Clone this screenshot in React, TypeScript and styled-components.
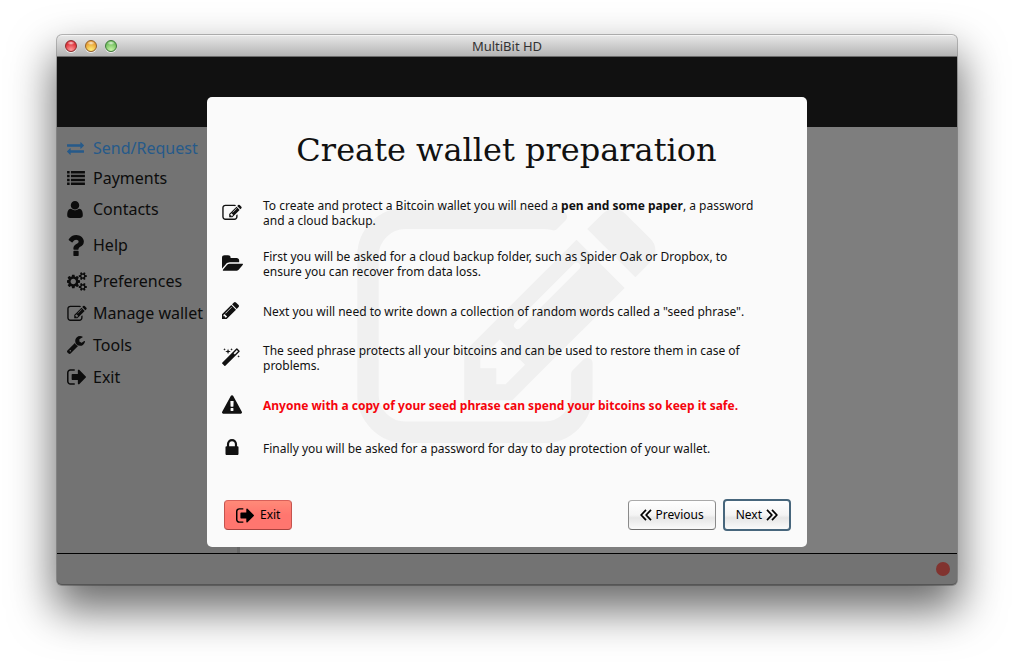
import React from "react";
import styled, { createGlobalStyle, css } from "styled-components";

const sans = `"Noto Sans", "Open Sans", sans-serif`;

const GlobalStyle = createGlobalStyle`
  * { box-sizing: border-box; }
  body { margin: 0; background: #fff; font-family: ${sans}; font-size: 12px; color: #111; }
`;

type Glyph = { box: string; d: string };

const glyphs: Record<string, Glyph> = {
  exchange: {
    box: "0 288 1792 1344",
    d: "M1792 1184v192q0 13-9.5 22.5t-22.5 9.5h-1376v192q0 13-9.5 22.5t-22.5 9.5q-12 0-24-10l-319-320q-9-9-9-22 0-14 9-23l320-320q9-9 23-9 13 0 22.5 9.5t9.5 22.5v192h1376q13 0 22.5 9.5t9.5 22.5zm0-544q0 14-9 23l-320 320q-9 9-23 9-13 0-22.5-9.5t-9.5-22.5v-192h-1376q-13 0-22.5-9.5t-9.5-22.5v-192q0-13 9.5-22.5t22.5-9.5h1376v-192q0-14 9-23t23-9q12 0 24 10l319 319q9 9 9 23z",
  },
  list: {
    box: "0 128 1792 1408",
    d: "M0 128h256v256h-256zM384 128h1408v256h-1408zM0 512h256v256h-256zM384 512h1408v256h-1408zM0 896h256v256h-256zM384 896h1408v256h-1408zM0 1280h256v256h-256zM384 1280h1408v256h-1408z",
  },
  user: {
    box: "192 128 1408 1536",
    d: "M1600 1405q0 120-73 189.5t-194 69.5h-874q-121 0-194-69.5t-73-189.5q0-53 3.5-103.5t14-109 26.5-108.5 43-97.5 62-81 85.5-53.5 111.5-20q9 0 42 21.5t74.5 48 108 48 133.5 21.5 133.5-21.5 108-48 74.5-48 42-21.5q61 0 111.5 20t85.5 53.5 62 81 43 97.5 26.5 108.5 14 109 3.5 103.5zm-320-893q0 159-112.5 271.5t-271.5 112.5-271.5-112.5-112.5-271.5 112.5-271.5 271.5-112.5 271.5 112.5 112.5 271.5z",
  },
  question: {
    box: "388 256 1016 1280",
    d: "M1088 1256v240q0 16-12 28t-28 12h-240q-16 0-28-12t-12-28v-240q0-16 12-28t28-12h240q16 0 28 12t12 28zm316-600q0 54-15.5 101t-35 76.5-55 59.5-57.5 43.5-61 35.5q-41 23-68.5 65t-27.5 67q0 17-12 32.5t-28 15.5h-240q-15 0-25.5-18.5t-10.5-37.5v-45q0-83 65-156.5t143-108.5q59-27 84-56t25-76q0-42-46.5-74t-107.5-32q-65 0-108 29-35 25-107 115-13 16-31 16-12 0-25-8l-164-125q-13-10-15.5-25t5.5-28q160-266 464-266 80 0 161 31t146 83 106 127.5 41 158.5z",
  },
  cogs: {
    box: "0 0 1856 1792",
    d: "M832 896q0-106-75-181t-181-75-181 75-75 181 75 181 181 75 181-75 75-181zm768 512q0-52-38-90t-90-38-90 38-38 90q0 53 37.5 90.5t90.5 37.5 90.5-37.5 37.5-90.5zm0-1024q0-52-38-90t-90-38-90 38-38 90q0 53 37.5 90.5t90.5 37.5 90.5-37.5 37.5-90.5zm-384 421v185q0 10-7 19.5t-16 10.5l-155 24q-11 35-32 76 34 48 90 115 7 11 7 20 0 12-7 19-23 30-82.5 89.5t-78.5 59.5q-11 0-21-7l-115-90q-37 19-77 31-11 108-23 155-7 24-30 24h-186q-11 0-20-7.5t-10-17.5l-23-153q-34-10-75-31l-118 89q-7 7-20 7-11 0-21-8-144-133-144-160 0-9 7-19 10-14 41-53t47-61q-23-44-35-82l-152-24q-10-1-17-9.5t-7-19.5v-185q0-10 7-19.5t16-10.5l155-24q11-35 32-76-34-48-90-115-7-11-7-20 0-12 7-20 22-30 82-89t79-59q11 0 21 7l115 90q34-18 77-32 11-108 23-154 7-24 30-24h186q11 0 20 7.5t10 17.5l23 153q34 10 75 31l118-89q8-7 20-7 11 0 21 8 144 133 144 160 0 8-7 19-12 16-42 54t-45 60q23 48 34 82l152 23q10 2 17 10.5t7 19.5zm640 533v140q0 16-149 31-12 27-30 52 51 113 51 138 0 4-4 7-122 71-124 71-8 0-46-47t-52-68q-20 2-30 2t-30-2q-14 21-52 68t-46 47q-2 0-124-71-4-3-4-7 0-25 51-138-18-25-30-52-149-15-149-31v-140q0-16 149-31 13-29 30-52-51-113-51-138 0-4 4-7 4-2 35-20t59-34 30-16q8 0 46 46.5t52 67.5q20-2 30-2t30 2q51-71 92-112l6-2q4 0 124 70 4 3 4 7 0 25-51 138 17 23 30 52 149 15 149 31zm0-1024v140q0 16-149 31-12 27-30 52 51 113 51 138 0 4-4 7-122 71-124 71-8 0-46-47t-52-68q-20 2-30 2t-30-2q-14 21-52 68t-46 47q-2 0-124-71-4-3-4-7 0-25 51-138-18-25-30-52-149-15-149-31v-140q0-16 149-31 13-29 30-52-51-113-51-138 0-4 4-7 4-2 35-20t59-34 30-16q8 0 46 46.5t52 67.5q20-2 30-2t30 2q51-71 92-112l6-2q4 0 124 70 4 3 4 7 0 25-51 138 17 23 30 52 149 15 149 31z",
  },
  edit: {
    box: "0 64 1792 1472",
    d: "M888 1184l116-116-152-152-116 116v56h96v96h56zm440-720q-16-16-33 1l-350 350q-17 17-1 33t33-1l350-350q17-17 1-33zm80 594v190q0 119-84.5 203.5t-203.5 84.5h-832q-119 0-203.5-84.5t-84.5-203.5v-832q0-119 84.5-203.5t203.5-84.5h832q63 0 117 25 15 7 18 23 3 17-9 29l-49 49q-14 14-32 8-23-6-45-6h-832q-66 0-113 47t-47 113v832q0 66 47 113t113 47h832q66 0 113-47t47-113v-126q0-13 9-22l64-64q15-15 35-7t20 29zm-96-738l288 288-672 672h-288v-288zm444 132l-92 92-288-288 92-92q28-28 68-28t68 28l152 152q28 28 28 68t-28 68z",
  },
  wrench: {
    box: "85 128 1641 1643",
    d: "M448 1472q0-26-19-45t-45-19-45 19-19 45 19 45 45 19 45-19 19-45zm644-420l-682 682q-37 37-90 37-52 0-91-37l-106-108q-38-36-38-90 0-53 38-91l681-681q39 98 114.5 173.5t173.5 114.5zm634-435q0 39-23 106-47 134-164.5 217.5t-258.5 83.5q-185 0-316.5-131.5t-131.5-316.5 131.5-316.5 316.5-131.5q58 0 121.5 16.5t107.5 46.5q16 11 16 28t-16 28l-293 169v224l193 107q5-3 79-48.5t135.5-81 70.5-35.5q15 0 23.5 10t8.5 25z",
  },
  signOut: {
    box: "64 256 1568 1280",
    d: "M704 1440q0 4 1 20t.5 26.5-3 23.5-10 19.5-20.5 6.5h-320q-119 0-203.5-84.5t-84.5-203.5v-704q0-119 84.5-203.5t203.5-84.5h320q13 0 22.5 9.5t9.5 22.5q0 4 1 20t.5 26.5-3 23.5-10 19.5-20.5 6.5h-320q-66 0-113 47t-47 113v704q0 66 47 113t113 47h312l11.5 1 11.5 3 8 5.5 7 9 2 13.5zm928-544q0 26-19 45l-544 544q-19 19-45 19t-45-19-19-45v-288h-448q-26 0-45-19t-19-45v-384q0-26 19-45t45-19h448v-288q0-26 19-45t45-19 45 19l544 544q19 19 19 45z",
  },
  folder: {
    box: "0 128 1879 1408",
    d: "M1879 952q0 31-31 66l-336 396q-43 51-120.5 86.5t-143.5 35.5h-1088q-34 0-60.5-13t-26.5-43q0-31 31-66l336-396q43-51 120.5-86.5t143.5-35.5h1088q34 0 60.5 13t26.5 43zm-343-344v160h-832q-94 0-197 47.5t-164 119.5l-337 396-5 6q0-4-.5-12.5t-.5-12.5v-960q0-92 66-158t158-66h320q92 0 158 66t66 158v32h544q92 0 158 66t66 158z",
  },
  pencil: {
    box: "128 149 1515 1515",
    d: "M491 1536l91-91-235-235-91 91v107h128v128h107zm523-928q0-22-22-22-10 0-17 7l-542 542q-7 7-7 17 0 22 22 22 10 0 17-7l542-542q7-7 7-17zm-54-192l416 416-832 832h-416v-416zm683 96q0 53-37 90l-166 166-416-416 166-165q36-38 90-38 53 0 91 38l235 234q37 39 37 91z",
  },
  magic: {
    box: "91 0 1637 1637",
    d: "M1254 581l293-293-107-107-293 293zm447-293q0 27-18 45l-1286 1286q-18 18-45 18t-45-18l-198-198q-18-18-18-45t18-45l1286-1286q18-18 45-18t45 18l198 198q18 18 18 45zm-1351-190l98 30-98 30-30 98-30-98-98-30 98-30 30-98zm350 162l196 60-196 60-60 196-60-196-196-60 196-60 60-196zm930 478l98 30-98 30-30 98-30-98-98-30 98-30 30-98zm-640-640l98 30-98 30-30 98-30-98-98-30 98-30 30-98z",
  },
  warning: {
    box: "0 0 1792 1664",
    d: "M1024 1375v-190q0-14-9.5-23.5t-22.5-9.5h-192q-13 0-22.5 9.5t-9.5 23.5v190q0 14 9.5 23.5t22.5 9.5h192q13 0 22.5-9.5t9.5-23.5zm-2-374l18-459q0-12-10-19-13-11-24-11h-220q-11 0-24 11-10 7-10 21l17 457q0 10 10 16.5t24 6.5h185q14 0 23.5-6.5t10.5-16.5zm-14-934l768 1408q35 63-2 126-17 29-46.5 46t-63.5 17h-1536q-34 0-63.5-17t-46.5-46q-37-63-2-126l768-1408q17-31 47-49t65-18 65 18 47 49z",
  },
  lock: {
    box: "10 128 1772 1408",
    d: "M640 768h512v-192q0-106-75-181t-181-75-181 75-75 181v192zm832 96v576q0 40-28 68t-68 28h-960q-40 0-68-28t-28-68v-576q0-40 28-68t68-28h32v-192q0-184 132-316t316-132 316 132 132 316v192h32q40 0 68 28t28 68z",
  },
};

const Svg = styled.svg`
  display: block;
  flex: none;
  fill: currentColor;
`;

function Icon({ name, size }: { name: string; size: number }) {
  const { box, d } = glyphs[name];
  const [, , w, h] = box.split(" ").map(Number);
  return (
    <Svg viewBox={box} width={size} height={Math.round((size * h) / w)} aria-hidden="true">
      <path d={d} />
    </Svg>
  );
}

function Chevrons({ back }: { back?: boolean }) {
  return (
    <Svg viewBox="0 0 12 12" width={12} height={12} aria-hidden="true">
      <path
        d={back ? "M6 .8L1.2 6 6 11.2M11 .8L6.2 6l4.8 5.2" : "M1 .8L5.8 6 1 11.2M6 .8L10.8 6 6 11.2"}
        fill="none"
        stroke="currentColor"
        strokeWidth="1.7"
      />
    </Svg>
  );
}

const Desktop = styled.div`
  min-height: 100vh;
  padding: 35px 57px 79px;
  display: flex;
  overflow: hidden;
`;

const Window = styled.div`
  position: relative;
  flex: 1;
  display: flex;
  flex-direction: column;
  border-radius: 5px;
  background: #737373;
  box-shadow: 0 0 0 1px rgba(0, 0, 0, 0.25), 0 22px 44px 3px rgba(0, 0, 0, 0.58);
`;

const TitleBar = styled.header`
  position: relative;
  display: flex;
  justify-content: center;
  align-items: center;
  height: 22px;
  border-radius: 5px 5px 0 0;
  border-top: 1px solid #f4f4f4;
  border-bottom: 1px solid #6a6a6a;
  background: linear-gradient(#e6e6e6, #b4b4b4);
  color: #333;
  font-size: 13px;
  line-height: 18px;
`;

const Lights = styled.div`
  position: absolute;
  left: 8px;
  top: 4px;
  display: flex;
  gap: 8px;
`;

const Light = styled.button<{ $rim: string; $core: string; $glow: string }>`
  width: 12px;
  height: 12px;
  padding: 0;
  border: 1px solid ${(p) => p.$rim};
  border-radius: 50%;
  background: radial-gradient(ellipse 4px 2px at 50% 20%, #fffc, transparent),
    radial-gradient(circle at 50% 90%, ${(p) => p.$glow}, ${(p) => p.$core} 75%);
  box-shadow: 0 1px 0 #eee;
`;

const Banner = styled.div`
  height: 70px;
  background: #111;
`;

const Main = styled.div`
  flex: 1;
  display: flex;
  border-bottom: 1px solid #000;
`;

const Sidebar = styled.nav`
  width: 180px;
  padding: 6px 0 0 10px;
  background: #737373;
`;

const NavLink = styled.a<{ $height: number; $active?: boolean }>`
  display: grid;
  grid-template-columns: 20px auto;
  align-items: center;
  column-gap: 6px;
  height: ${(p) => p.$height}px;
  color: ${(p) => (p.$active ? "#265a8a" : "#0c0c0c")};
  font-size: 16px;
  line-height: 22px;
  white-space: nowrap;
  text-decoration: none;
`;

const Content = styled.div`
  flex: 1;
  border-left: 3px solid #666;
  background: #7e7e7e;
`;

const StatusBar = styled.footer`
  display: flex;
  justify-content: flex-end;
  align-items: center;
  height: 31px;
  padding-right: 7px;
  border-bottom: 1px solid #555;
  border-radius: 0 0 5px 5px;
  background: #737373;
`;

const StatusDot = styled.span`
  width: 14px;
  height: 14px;
  border-radius: 50%;
  background: #81332f;
`;

const Dialog = styled.section`
  position: absolute;
  top: 62px;
  left: 0;
  right: 0;
  margin: 0 auto;
  width: 600px;
  max-width: 100%;
  min-height: 450px;
  padding: 29px 16px 16px 15px;
  display: flex;
  flex-direction: column;
  border-radius: 5px;
  background: #fafafa;
`;

const Watermark = styled.div`
  position: absolute;
  top: 100px;
  left: 0;
  right: 0;
  display: flex;
  justify-content: center;
  color: #f0f0f0;
`;

const Title = styled.h1`
  position: relative;
  margin: 0 0 24px;
  font-family: "DejaVu Serif", serif;
  font-size: 32px;
  font-weight: 400;
  line-height: 48px;
  text-align: center;
`;

const Notes = styled.ul`
  position: relative;
  margin: 0;
  padding: 0 26px 0 0;
  display: grid;
  gap: 21px;
  list-style: none;
`;

const Note = styled.li<{ $alert?: boolean }>`
  display: grid;
  grid-template-columns: 20px 1fr;
  align-items: center;
  column-gap: 21px;
  min-height: 22px;
  line-height: 15px;
  & > svg {
    margin-bottom: 2px;
  }
  ${(p) =>
    p.$alert &&
    css`
      & > p {
        color: #f5040c;
        font-weight: 700;
      }
    `}
`;

const NoteText = styled.p`
  margin: 0;
`;

const Actions = styled.div`
  position: relative;
  display: flex;
  align-items: center;
  gap: 7px;
  margin-top: auto;
  padding-left: 2px;
`;

const Button = styled.button<{ $tone?: "danger" | "focus" }>`
  display: flex;
  align-items: center;
  justify-content: center;
  gap: 4px;
  height: 30px;
  padding: 0 11px;
  border: 1px solid #8a8a8a;
  border-color: #aaa #8a8a8a #6e6e6e;
  border-radius: 4px;
  background: linear-gradient(#fff, #f4f4f4 50%, #e6e6e6 60%, #fafafa);
  color: #000;
  font-family: ${sans};
  font-size: 12px;
  line-height: 16px;
  ${(p) =>
    p.$tone === "danger" &&
    css`
      gap: 6px;
      margin-right: auto;
      border-color: #d9605a #c4534e #a8423e;
      background: linear-gradient(#ff8a78, #ff766f 50%);
    `}
  ${(p) =>
    p.$tone === "focus" &&
    css`
      height: 32px;
      border: 2px solid #47667c;
    `}
`;

const nav = [
  { icon: "exchange", size: 17, label: "Send/Request", height: 30, active: true },
  { icon: "list", size: 18, label: "Payments", height: 30 },
  { icon: "user", size: 16, label: "Contacts", height: 32 },
  { icon: "question", size: 17, label: "Help", height: 40 },
  { icon: "cogs", size: 20, label: "Preferences", height: 32 },
  { icon: "edit", size: 20, label: "Manage wallet", height: 32 },
  { icon: "wrench", size: 18, label: "Tools", height: 32 },
  { icon: "signOut", size: 19, label: "Exit", height: 32 },
];

const notes: { icon: string; size: number; alert?: boolean; text: React.ReactNode }[] = [
  {
    icon: "edit",
    size: 20,
    text: (
      <>
        To create and protect a Bitcoin wallet you will need a <b>pen and some paper</b>, a password
        and a cloud backup.
      </>
    ),
  },
  {
    icon: "folder",
    size: 21,
    text: "First you will be asked for a cloud backup folder, such as Spider Oak or Dropbox, to ensure you can recover from data loss.",
  },
  {
    icon: "pencil",
    size: 17,
    text: 'Next you will need to write down a collection of random words called a "seed phrase".',
  },
  {
    icon: "magic",
    size: 18,
    text: "The seed phrase protects all your bitcoins and can be used to restore them in case of problems.",
  },
  {
    icon: "warning",
    size: 20,
    alert: true,
    text: "Anyone with a copy of your seed phrase can spend your bitcoins so keep it safe.",
  },
  {
    icon: "lock",
    size: 20,
    text: "Finally you will be asked for a password for day to day protection of your wallet.",
  },
];

export default function App() {
  return (
    <Desktop>
      <GlobalStyle />
      <Window>
        <TitleBar>
          <Lights>
            <Light aria-label="Close" $rim="#8c2c2c" $core="#dc2730" $glow="#ff9c9c" />
            <Light aria-label="Minimize" $rim="#94622a" $core="#e79a2e" $glow="#fff07a" />
            <Light aria-label="Zoom" $rim="#3f7a3a" $core="#6cbb58" $glow="#c8f5a8" />
          </Lights>
          MultiBit HD
        </TitleBar>
        <Banner />
        <Main>
          <Sidebar>
            {nav.map((item) => (
              <NavLink key={item.label} href="#" $height={item.height} $active={item.active}>
                <Icon name={item.icon} size={item.size} />
                {item.label}
              </NavLink>
            ))}
          </Sidebar>
          <Content />
        </Main>
        <StatusBar>
          <StatusDot />
        </StatusBar>
        <Dialog role="dialog" aria-labelledby="dialog-title">
          <Watermark>
            <Icon name="edit" size={300} />
          </Watermark>
          <Title id="dialog-title">Create wallet preparation</Title>
          <Notes>
            {notes.map((note) => (
              <Note key={note.icon} $alert={note.alert}>
                <Icon name={note.icon} size={note.size} />
                <NoteText>{note.text}</NoteText>
              </Note>
            ))}
          </Notes>
          <Actions>
            <Button $tone="danger">
              <Icon name="signOut" size={18} />
              Exit
            </Button>
            <Button>
              <Chevrons back />
              Previous
            </Button>
            <Button $tone="focus">
              Next
              <Chevrons />
            </Button>
          </Actions>
        </Dialog>
      </Window>
    </Desktop>
  );
}
